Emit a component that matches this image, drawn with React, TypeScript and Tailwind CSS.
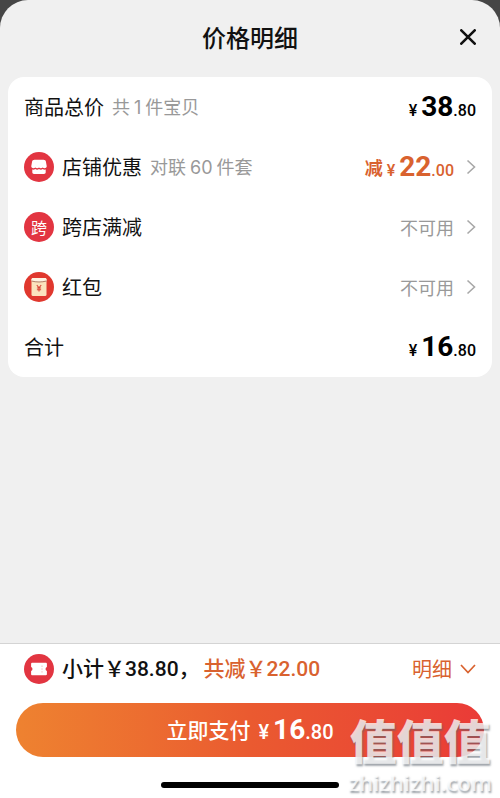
import React from 'react';

type PriceProps = {
  value: string;
  symbolClass?: string;
  centsClass?: string;
};

function Price({ value, symbolClass = 'text-base', centsClass = 'text-base' }: PriceProps) {
  const [whole, cents] = value.split('.');

  return (
    <span className="inline-flex items-baseline font-['Roboto','Noto_Sans_CJK_SC',sans-serif] leading-8">
      <span className={`mr-1 font-medium ${symbolClass}`}>¥</span>
      <span className="text-[28px] font-bold">{whole}</span>
      <span className={`font-medium ${centsClass}`}>.{cents}</span>
    </span>
  );
}

function ShopIcon() {
  return (
    <svg viewBox="0 0 30 30" className="size-[30px] shrink-0" aria-hidden="true">
      <circle cx="15" cy="15" r="15" fill="#e23541" />
      <path
        d="M10.500 7.700h9c1.300 0 2.200.7 2.400 1.900l.8 4.400c.2 1.300-.8 2.200-2.100 2.200-.8 0-1.500-.3-1.900-.8-.4.500-1.100.8-1.850.8s-1.450-.3-1.850-.8c-.4.500-1.100.8-1.850.8s-1.450-.3-1.850-.8c-.4.500-1.100.8-1.900.8-1.300 0-2.300-.9-2.100-2.200l.8-4.400c.2-1.200 1.100-1.900 2.400-1.900z"
        fill="#fff"
      />
      <path
        d="M8.300 17.600c1.100.3 2.100.1 3-.5 1.100.7 2.500.7 3.700 0 1.200.7 2.600.7 3.700 0 .9.600 1.900.8 3 .5v2.600c0 1-.8 1.700-1.700 1.700H10c-.9 0-1.700-.7-1.700-1.700z"
        fill="#fff"
      />
    </svg>
  );
}

function RedPacketIcon() {
  return (
    <svg viewBox="0 0 30 30" className="size-[30px] shrink-0" aria-hidden="true">
      <circle cx="15" cy="15" r="15" fill="#e0382e" />
      <rect x="7.500" y="6" width="15" height="18" rx="1.500" fill="#fbe3bd" />
      <path d="M9 6h12c.8 0 1.500.7 1.500 1.500V9c-4.500 1.300-10.500 1.300-15 0V7.500C7.500 6.700 8.200 6 9 6z" fill="#fff3e2" />
      <path d="M7.500 9c4.500 1.300 10.500 1.300 15 0" fill="none" stroke="#a9705a" strokeWidth="0.900" />
      <path
        d="M12.800 13l2.200 2.800 2.200-2.800M15 15.800v3.700M12.900 16h4.200M12.900 17.800h4.200"
        fill="none"
        stroke="#d9483a"
        strokeWidth="1.100"
      />
    </svg>
  );
}

function CouponIcon() {
  return (
    <svg viewBox="0 0 30 30" className="size-[30px] shrink-0" aria-hidden="true">
      <circle cx="15" cy="15" r="15" fill="#e23541" />
      <path
        d="M8 8.800h14c.5 0 .9.400.9.900v3.400a2 2 0 0 0 0 3.800v3.400c0 .5-.4.900-.9.900H8c-.5 0-.9-.4-.9-.9v-3.400a2 2 0 0 0 0-3.800V9.700c0-.5.400-.9.900-.9z"
        fill="#fff"
      />
      <path d="M18 11.500v1.500M18 14.300v1.500M18 17.100v1.500" stroke="#f3b5b9" strokeWidth="0.900" />
    </svg>
  );
}

function CrossShopIcon() {
  return (
    <span className="flex size-[30px] shrink-0 items-center justify-center rounded-full bg-[#e23541] text-base text-white">
      跨
    </span>
  );
}

function ChevronRight() {
  return (
    <svg viewBox="0 0 10 16" className="ml-3 h-4 w-[10px] shrink-0" aria-hidden="true">
      <path d="M1.500 1.500L8.500 8l-7 6.500" fill="none" stroke="#a8a8a8" strokeWidth="1.600" />
    </svg>
  );
}

type RowProps = {
  icon?: React.ReactNode;
  label: string;
  note?: React.ReactNode;
  children: React.ReactNode;
};

function Row({ icon, label, note, children }: RowProps) {
  return (
    <li className="flex h-[60px] items-center justify-between">
      <div className="flex items-center gap-2">
        {icon}
        <span className="text-xl text-[#111]">{label}</span>
        {note && <span className="text-lg text-[#999]">{note}</span>}
      </div>
      {children}
    </li>
  );
}

function Unavailable() {
  return (
    <button type="button" className="flex items-center text-lg text-[#999]">
      不可用
      <ChevronRight />
    </button>
  );
}

export default function App() {
  return (
    <div className="min-h-screen bg-[#464646] font-['Noto_Sans_CJK_SC',sans-serif]">
      <div className="flex min-h-screen flex-col overflow-hidden rounded-t-[28px] bg-[#f0f0f0]">
        {/* Header */}
        <header className="grid h-[77px] shrink-0 grid-cols-[1fr_auto_1fr] items-center px-5 pb-1">
          <h1 className="col-start-2 text-2xl font-medium text-[#111]">价格明细</h1>
          <button type="button" aria-label="关闭" className="justify-self-end p-1">
            <svg viewBox="0 0 16 16" className="size-4" aria-hidden="true">
              <path d="M1.300 1.300l13.400 13.400M14.700 1.300L1.300 14.700" stroke="#111" strokeWidth="2.600" strokeLinecap="round" />
            </svg>
          </button>
        </header>

        {/* Price list */}
        <main className="flex-1 px-2">
          <ul className="rounded-2xl bg-white px-4">
            <Row
              label="商品总价"
              note={<>共<span className="mx-1 font-['Inter']">1</span>件宝贝</>}
            >
              <Price value="38.80" />
            </Row>
            <Row
              icon={<ShopIcon />}
              label="店铺优惠"
              note={<>对联<span className="mx-1 font-['Inter']">60</span>件套</>}
            >
              <button type="button" className="flex items-center text-[#d9622f]">
                <span className="mr-1 text-lg font-bold">减</span>
                <Price value="22.00" />
                <ChevronRight />
              </button>
            </Row>
            <Row icon={<CrossShopIcon />} label="跨店满减">
              <Unavailable />
            </Row>
            <Row icon={<RedPacketIcon />} label="红包">
              <Unavailable />
            </Row>
            <Row label="合计">
              <Price value="16.80" />
            </Row>
          </ul>
        </main>

        {/* Footer */}
        <footer className="relative border-t border-[#d4d4d4] bg-white px-4 pb-[10px]">
          <div className="flex h-[59px] items-center justify-between px-2 pb-[10px]">
            <div className="flex items-center gap-2">
              <CouponIcon />
              <p className="text-[21px] font-medium text-[#111]">
                小计￥<span className="font-['Roboto']">38.80</span>，
                <span className="ml-1 text-[#d9622f]">
                  共减￥<span className="font-['Roboto']">22.00</span>
                </span>
              </p>
            </div>
            <button type="button" className="flex items-center gap-2 text-xl text-[#d9622f]">
              明细
              <svg viewBox="0 0 16 10" className="h-[10px] w-4" aria-hidden="true">
                <path d="M1 1l7 7.500L15 1" fill="none" stroke="currentColor" strokeWidth="1.700" />
              </svg>
            </button>
          </div>

          <button
            type="button"
            className="flex h-[54px] w-full items-center justify-center gap-2 rounded-full bg-linear-to-r from-[#ee8230] via-[#ea5a30] to-[#ea3a37] text-[21px] font-medium text-white"
          >
            立即支付
            <Price value="16.80" symbolClass="text-xl" centsClass="text-xl" />
          </button>

          {/* Home indicator */}
          <div className="mx-auto mt-[25px] h-[6px] w-[178px] rounded-full bg-black" />

          <div
            aria-hidden="true"
            className="pointer-events-none absolute right-2 bottom-1 flex flex-col items-center gap-[6px] text-white/75 [text-shadow:1px_2px_2px_rgb(90_100_110/0.6)]"
          >
            <div className="text-[47px] leading-[50px] font-black">值值值</div>
            <div className="font-['Open_Sans'] text-[22px] leading-6 font-semibold">zhizhizhi.com</div>
          </div>
        </footer>
      </div>
    </div>
  );
}
